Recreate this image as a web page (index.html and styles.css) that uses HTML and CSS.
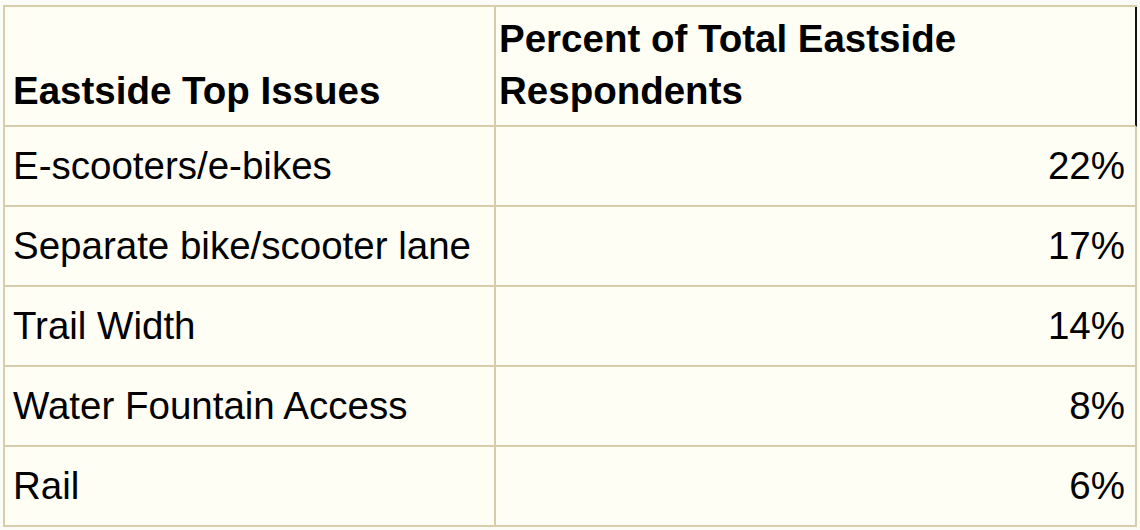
FILE: index.html
```html
<!DOCTYPE html>
<html lang="en">
<head>
<meta charset="utf-8">
<title>Eastside Top Issues</title>
<link rel="stylesheet" href="styles.css">
</head>
<body>
<table class="issues">
  <thead>
    <tr class="head-row">
      <th class="col-issue">Eastside Top Issues</th>
      <th class="col-pct">Percent of Total Eastside Respondents</th>
    </tr>
  </thead>
  <tbody>
    <tr><td class="issue">E-scooters/e-bikes</td><td class="pct">22%</td></tr>
    <tr><td class="issue">Separate bike/scooter lane</td><td class="pct">17%</td></tr>
    <tr><td class="issue">Trail Width</td><td class="pct">14%</td></tr>
    <tr><td class="issue">Water Fountain Access</td><td class="pct">8%</td></tr>
    <tr><td class="issue">Rail</td><td class="pct">6%</td></tr>
  </tbody>
</table>
</body>
</html>
```

FILE: styles.css
```css
html, body {
  margin: 0;
  background: #fbfbf7;
}

body {
  padding: 5px 3px 0 3px;
  font-family: "Liberation Sans", Arial, sans-serif;
  color: #000;
}

.issues {
  width: 1134px;
  border-collapse: separate;
  border-spacing: 0;
  background: #fffef5;
  border-top: 2px solid #d8cdab;
  border-left: 2px solid #d8cdab;
  table-layout: fixed;
}

.issues th,
.issues td {
  border-right: 2px solid #d8cdab;
  border-bottom: 2px solid #d8cdab;
  font-size: 38.5px;
  box-sizing: border-box;
}

.head-row th {
  height: 120px;
  vertical-align: bottom;
  text-align: left;
  font-weight: bold;
  line-height: 52px;
  padding-bottom: 8px;
}

.col-issue {
  width: 491px;
  padding-left: 8px;
  padding-right: 4px;
}

.col-pct {
  padding-left: 3px;
  padding-right: 4px;
}

.head-row th:last-child {
  border-right-color: #111;
}

.issues tbody td {
  height: 80px;
  vertical-align: middle;
  line-height: 44px;
  padding: 0;
}

.issue {
  padding-left: 8px !important;
}

.pct {
  text-align: right;
  padding-right: 10px !important;
}
```
